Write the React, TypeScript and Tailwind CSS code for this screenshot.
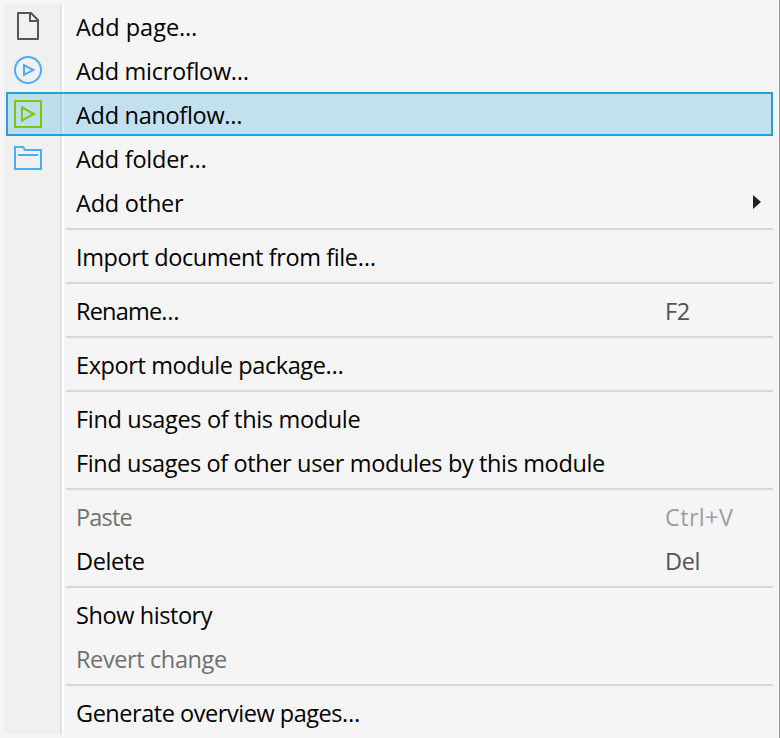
import type { ReactNode } from "react";

type Entry = {
  label: string;
  tracking: string;
  icon?: ReactNode;
  shortcut?: string;
  shortcutTracking?: string;
  selected?: boolean;
  disabled?: boolean;
  submenu?: boolean;
};

const PageIcon = () => (
  <svg width="28" height="28" viewBox="0 0 28 28" fill="none" stroke="#555555" strokeWidth="2">
    <path d="M4 1H17L24 8V27H4Z" strokeLinejoin="round" />
    <path d="M16 1V9H24" />
  </svg>
);

const MicroflowIcon = () => (
  <svg width="28" height="28" viewBox="0 0 28 28" fill="none" stroke="#4baef5" strokeWidth="2">
    <circle cx="14" cy="14" r="13" />
    <path d="M10 9.2L19.3 14L10 18.8Z" />
  </svg>
);

const NanoflowIcon = () => (
  <svg width="28" height="28" viewBox="0 0 28 28" fill="none" stroke="#76ca0a" strokeWidth="2">
    <rect x="1" y="1" width="26" height="26" />
    <path d="M8 7.5L20 14L8 20.5Z" />
  </svg>
);

const FolderIcon = () => (
  <svg width="28" height="28" viewBox="0 0 28 28" fill="none" stroke="#4baef5" strokeWidth="2">
    <path d="M1 3H9L11 6H27V25H1Z" />
    <path d="M4 11H24" />
  </svg>
);

const groups: Entry[][] = [
  [
    { label: "Add page…", tracking: "tracking-[0px]", icon: <PageIcon /> },
    { label: "Add microflow…", tracking: "tracking-[-0.29px]", icon: <MicroflowIcon /> },
    { label: "Add nanoflow…", tracking: "tracking-[-0.3px]", icon: <NanoflowIcon />, selected: true },
    { label: "Add folder…", tracking: "tracking-[-0.24px]", icon: <FolderIcon /> },
    { label: "Add other", tracking: "tracking-[-0.22px]", submenu: true },
  ],
  [{ label: "Import document from file…", tracking: "tracking-[-0.39px]" }],
  [{ label: "Rename…", tracking: "tracking-[-0.8px]", shortcut: "F2", shortcutTracking: "tracking-[-0.5px]" }],
  [{ label: "Export module package…", tracking: "tracking-[-0.4px]" }],
  [
    { label: "Find usages of this module", tracking: "tracking-[-0.33px]" },
    { label: "Find usages of other user modules by this module", tracking: "tracking-[-0.37px]" },
  ],
  [
    {
      label: "Paste",
      tracking: "tracking-[-0.8px]",
      shortcut: "Ctrl+V",
      shortcutTracking: "tracking-[0.35px]",
      disabled: true,
    },
    { label: "Delete", tracking: "tracking-[-0.4px]", shortcut: "Del", shortcutTracking: "tracking-[-0.4px]" },
  ],
  [
    { label: "Show history", tracking: "tracking-[-0.42px]" },
    { label: "Revert change", tracking: "tracking-[-0.39px]", disabled: true },
  ],
  [{ label: "Generate overview pages…", tracking: "tracking-[-0.46px]" }],
];

function MenuRow({ entry }: { entry: Entry }) {
  return (
    <div
      role="menuitem"
      aria-disabled={entry.disabled}
      className={`flex h-11 items-center border-2 ${
        entry.selected ? "border-[#26a0da] bg-[#26a0da]/24" : "border-transparent"
      } ${entry.disabled ? "text-[#707070]" : "text-black"}`}
    >
      <span className="ml-1.5 w-[62px] shrink-0">{entry.icon}</span>
      <span className={`flex-1 whitespace-nowrap pt-0.5 ${entry.tracking}`}>{entry.label}</span>
      {entry.shortcut && (
        <span
          className={`w-[106px] shrink-0 whitespace-nowrap pt-0.5 ${entry.shortcutTracking ?? ""} ${
            entry.disabled ? "text-[#9e9e9e]" : "text-[#535353]"
          }`}
        >
          {entry.shortcut}
        </span>
      )}
      {entry.submenu && (
        <svg className="mr-2.5" width="8" height="14" viewBox="0 0 8 14" fill="#212121">
          <path d="M0 0L8 7L0 14Z" />
        </svg>
      )}
    </div>
  );
}

export default function App() {
  return (
    <div className="grid h-[738px] w-[780px] grid-cols-1 overflow-hidden border-r border-[#999999] bg-[#f5f5f5] py-1 font-['Open_Sans','Noto_Sans',sans-serif] text-[23.5px] leading-8">
      <div className="col-start-1 row-start-1 ml-1 flex h-[730px]">
        <div className="w-14 rounded-l bg-[#f0f0f0]" />
        <div className="w-0.5 bg-[#e2e2e2]" />
        <div className="w-0.5 bg-white" />
      </div>
      <div role="menu" className="col-start-1 row-start-1 ml-1.5 mr-1.5">
        {groups.map((group, index) => (
          <div key={index}>
            {index > 0 && <div role="separator" className="my-1 ml-[60px] h-0.5 bg-[#d7d7d7]" />}
            {group.map((entry) => (
              <MenuRow key={entry.label} entry={entry} />
            ))}
          </div>
        ))}
      </div>
    </div>
  );
}
